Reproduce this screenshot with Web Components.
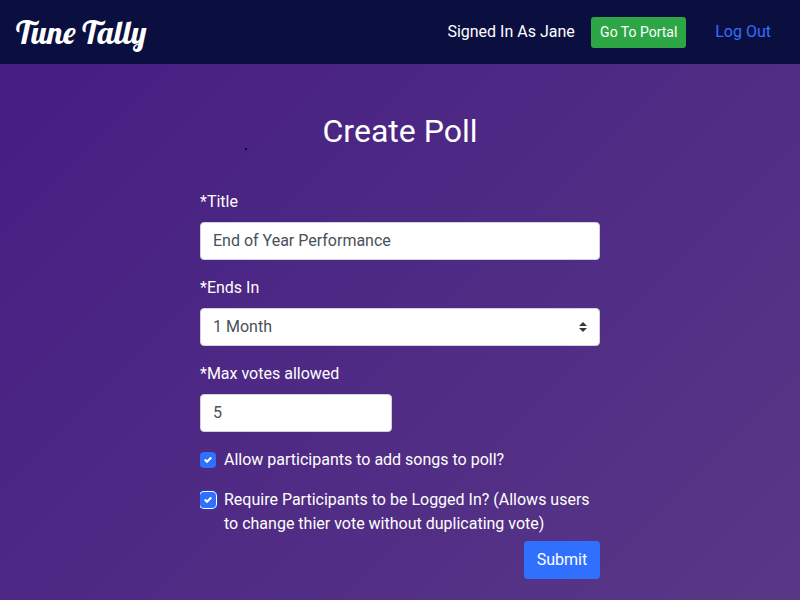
<!DOCTYPE html>
<html lang="en">
<head>
<meta charset="utf-8">
<title>Tune Tally</title>
<style>
html,body{margin:0;height:100%}
body{font:400 16px/24px Roboto,sans-serif;color:#fff;overflow:hidden}
</style>
</head>
<body>
<tune-app></tune-app>
<script>
const define = (name, html) => {
  const t = document.createElement('template');
  t.innerHTML = '<style>*{box-sizing:border-box}</style>' + html;
  customElements.define(name, class extends HTMLElement {
    constructor() {
      super();
      this.attachShadow({mode: 'open'}).append(t.content.cloneNode(true));
    }
  });
};

define('brand-mark', `
<style>
:host{display:block;font:400 32px/48px Lobster,"Liberation Serif",serif;white-space:nowrap}
</style>
<span>Tune Tally</span>`);

define('action-button', `
<style>
:host{display:block}
button{display:block;width:100%;border:0;border-radius:4px;background:#3070ff;color:#fff;font:400 16px/24px Roboto,sans-serif;padding:7px 11px;height:38px;white-space:nowrap}
:host([small]) button{background:#2da745;font-size:14px;line-height:21px;padding:5px 0;height:31px;border-radius:3px}
</style>
<button><slot></slot></button>`);

define('nav-bar', `
<style>
:host{display:flex;height:64px;background:#0b0f40;padding:8px 29px 8px 16px;align-items:flex-start}
.user{margin-left:auto;margin-top:12px;margin-right:16.5px;white-space:nowrap}
action-button{width:95px;margin-top:9px}
a{color:#3070ff;margin:12px 0 0 29px;white-space:nowrap}
</style>
<brand-mark></brand-mark><span class="user">Signed In As Jane</span>
<action-button small>Go To Portal</action-button><a>Log Out</a>`);

define('form-field', `
<style>
:host{display:block;height:70px;margin-bottom:16px}
label{display:block;margin-bottom:8px}
.box{display:flex;align-items:center;justify-content:space-between;width:var(--w,400px);height:38px;background:#fff;border:1px solid #ced4da;border-radius:4px;padding:0 12px;color:#495057}
</style>
<label><slot name="label"></slot></label>
<div class="box"><slot></slot><slot name="icon"></slot></div>`);

define('check-row', `
<style>
:host{display:flex;gap:8px;margin-bottom:16px}
i{flex:none;width:16px;height:16px;margin-top:4px;border-radius:4px;background:#3070ff;display:flex;align-items:center;justify-content:center}
:host([focused]) i{box-shadow:0 0 0 1px #fff,0 0 0 3px rgba(0,80,255,.25);clip-path:inset(-4px -4px -4px 0)}
svg{display:block}
</style>
<i><svg width="8" height="8" viewBox="0 0 8 8"><path fill="#fff" d="M6.564.75l-3.59 3.612-1.538-1.55L0 4.26 2.974 7.25 8 2.193z"/></svg></i>
<span><slot></slot></span>`);

define('poll-form', `
<style>
:host{display:block;width:400px;margin:0 auto;padding-top:48px}
h1{font:400 32px/38px Roboto,sans-serif;text-align:center;margin:0 0 40px}
action-button{width:76px;margin:5px 0 0 auto}
.last{margin-bottom:0}
</style>
<h1>Create Poll</h1>
<form-field><span slot="label">*Title</span>End of Year Performance</form-field>
<form-field><span slot="label">*Ends In</span>1 Month<svg slot="icon" width="8" height="10" viewBox="0 0 4 5"><path fill="#343a40" d="M2 0L0 2h4zm0 5L0 3h4z"/></svg></form-field>
<form-field style="--w:192px"><span slot="label">*Max votes allowed</span>5</form-field>
<check-row>Allow participants to add songs to poll?</check-row>
<check-row focused class="last">Require Participants to be Logged In? (Allows users to change thier vote without duplicating vote)</check-row>
<action-button>Submit</action-button>`);

define('tune-app', `
<style>
:host{display:block;position:relative;height:600px;background:linear-gradient(135deg,#451c83,#583886)}
.dot{position:absolute;left:245px;top:148px;width:2px;height:2px;background:#100720}
</style>
<nav-bar></nav-bar><poll-form></poll-form><span class="dot"></span>`);
</script>
</body>
</html>
